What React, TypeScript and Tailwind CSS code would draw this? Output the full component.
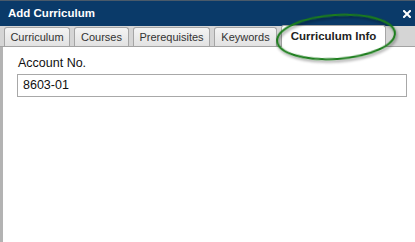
import React from "react";

const tabs = [
  { label: "Curriculum", w: 66 },
  { label: "Courses", w: 55 },
  { label: "Prerequisites", w: 77 },
  { label: "Keywords", w: 63 },
];

export default function App() {
  return (
    <div className="relative w-[415px] h-[242px] overflow-hidden bg-white flex flex-col font-['Liberation_Sans',Arial,sans-serif]">
      {/* Header */}
      <div className="h-[26px] shrink-0 bg-[#0a3a69] border-t border-[#4a5a6a] flex items-center justify-between pl-[8px] pr-[4px]">
        <span className="text-white font-bold text-[11.5px] leading-none">Add Curriculum</span>
        <svg width="8" height="8" viewBox="0 0 8 8" className="mt-[1px]">
          <path d="M1 1 L7 7 M7 1 L1 7" stroke="#ffffff" strokeWidth="2" strokeLinecap="square" />
        </svg>
      </div>
      {/* Tab strip */}
      <div className="h-[21px] shrink-0 bg-[#d5d5d5] border-b border-[#a3a3a3] flex items-end gap-[4px] pl-[4px]">
        {tabs.map((t) => (
          <div
            key={t.label}
            style={{ width: t.w }}
            className="h-[19px] border border-b-0 border-[#a5a5a5] rounded-t-[3px] bg-gradient-to-b from-[#f4f4f4] to-[#e2e2e2] flex items-center justify-center text-[11px] text-[#333333]"
          >
            {t.label}
          </div>
        ))}
        <div className="w-[105px] h-[22px] -mb-[1px] border border-b-0 border-[#a5a5a5] rounded-t-[3px] bg-white flex items-center justify-center pt-[1px] text-[11.5px] font-bold text-[#222222]">
          Curriculum Info
        </div>
      </div>
      {/* Content */}
      <div className="flex-1 border-l-[3px] border-[#b3b3b3] pl-[14px] pt-[9px] flex flex-col gap-[3px]">
        <div className="ml-[1px] text-[12.5px] leading-[15px] text-[#111111]">Account No.</div>
        <div className="w-[390px] h-[23px] border border-[#a8a8a8] flex items-center pl-[5px] text-[12.5px] text-[#111111]">
          8603-01
        </div>
      </div>
      {/* Highlight ellipse */}
      <svg className="absolute left-0 top-0 pointer-events-none" width="415" height="242">
        <defs>
          <filter id="sh" x="-20%" y="-40%" width="140%" height="180%">
            <feGaussianBlur in="SourceAlpha" stdDeviation="1.8" />
            <feOffset dx="1" dy="2" result="b" />
            <feComponentTransfer>
              <feFuncA type="linear" slope="0.45" />
            </feComponentTransfer>
            <feMerge>
              <feMergeNode />
              <feMergeNode in="SourceGraphic" />
            </feMerge>
          </filter>
        </defs>
        <ellipse
          cx="336"
          cy="37"
          rx="59"
          ry="22"
          transform="rotate(-4 336 37)"
          fill="none"
          stroke="#1b7d1b"
          strokeWidth="2"
          filter="url(#sh)"
        />
      </svg>
    </div>
  );
}
